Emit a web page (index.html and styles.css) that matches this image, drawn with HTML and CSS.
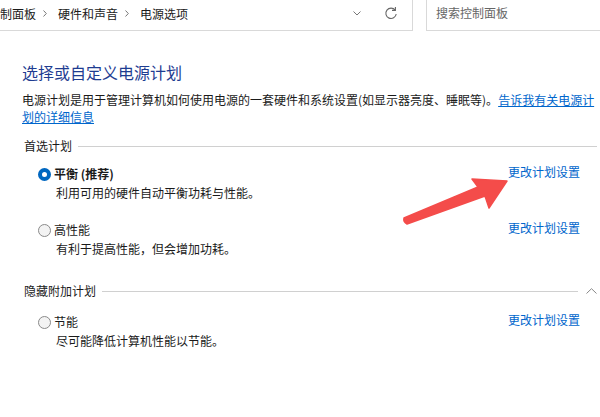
FILE: index.html
```html
<!DOCTYPE html>
<html lang="zh-CN">
<head>
<meta charset="utf-8">
<link rel="stylesheet" href="styles.css">
</head>
<body>
<div class="topbar">
  <div class="address">
    <div class="crumbs">
      <span>制面板</span>
      <svg class="sep" viewBox="0 0 4 7" width="4" height="7"><path d="M0.5 0.5 L3.3 3.5 L0.5 6.5" fill="none" stroke="#777" stroke-width="1"/></svg>
      <span>硬件和声音</span>
      <svg class="sep" viewBox="0 0 4 7" width="4" height="7"><path d="M0.5 0.5 L3.3 3.5 L0.5 6.5" fill="none" stroke="#777" stroke-width="1"/></svg>
      <span>电源选项</span>
    </div>
    <div class="addr-tools">
      <svg class="dd" viewBox="0 0 8 5" width="8" height="5"><path d="M0.5 0.5 L4 4 L7.5 0.5" fill="none" stroke="#777" stroke-width="1"/></svg>
      <svg class="refresh" viewBox="0 0 14 14" width="14" height="14"><path d="M11.2 4.2 A5.2 5.2 0 1 0 12.2 8" fill="none" stroke="#666" stroke-width="1.1"/><path d="M11.4 1 V4.4 H8" fill="none" stroke="#666" stroke-width="1.1"/></svg>
    </div>
  </div>
  <div class="search">搜索控制面板</div>
</div>

<div class="main">
  <h1 class="title">选择或自定义电源计划</h1>
  <p class="desc">电源计划是用于管理计算机如何使用电源的一套硬件和系统设置(如显示器亮度、睡眠等)。<a class="link" href="#">告诉我有关电源计划的详细信息</a></p>

  <div class="section-head"><span>首选计划</span><span class="rule"></span></div>

  <div class="plan first">
    <div class="plan-row">
      <span class="radio checked"></span>
      <span class="plan-name bold">平衡 (推荐)</span>
      <a class="change" href="#">更改计划设置</a>
    </div>
    <div class="plan-desc">利用可用的硬件自动平衡功耗与性能。</div>
  </div>

  <div class="plan second">
    <div class="plan-row">
      <span class="radio"></span>
      <span class="plan-name">高性能</span>
      <a class="change" href="#">更改计划设置</a>
    </div>
    <div class="plan-desc">有利于提高性能，但会增加功耗。</div>
  </div>

  <div class="section-head hidden-head"><span>隐藏附加计划</span><span class="rule"></span>
    <svg class="collapse" viewBox="0 0 11 6" width="11" height="6"><path d="M0.5 5.5 L5.5 0.7 L10.5 5.5" fill="none" stroke="#888" stroke-width="1"/></svg>
  </div>

  <div class="plan third">
    <div class="plan-row">
      <span class="radio"></span>
      <span class="plan-name">节能</span>
      <a class="change" href="#">更改计划设置</a>
    </div>
    <div class="plan-desc">尽可能降低计算机性能以节能。</div>
  </div>
</div>

<svg class="arrow" viewBox="0 0 600 417" width="600" height="417">
  <path d="M404 218 Q403 222 407 224 L485 196 L489 208 L507 181 L472 179 L478 187 Z" fill="#f44c4a" stroke="#f44c4a" stroke-width="1.5" stroke-linejoin="round"/>
</svg>
</body>
</html>
```

FILE: styles.css
```css
html, body {
  margin: 0;
  padding: 0;
  background: #ffffff;
}
body {
  width: 600px;
  height: 417px;
  overflow: hidden;
  position: relative;
  font-family: "Noto Sans CJK SC", "Noto Sans", sans-serif;
  font-size: 12px;
  color: #1a1a1a;
}
.topbar {
  display: flex;
  height: 31px;
}
.address {
  width: 413px;
  height: 30px;
  border-right: 1px solid #d9d9d9;
  border-bottom: 1px solid #d9d9d9;
  display: flex;
  align-items: center;
  justify-content: space-between;
  padding-bottom: 4px;
  box-sizing: border-box;
  height: 31px;
}
.crumbs {
  display: flex;
  align-items: center;
  line-height: 17px;
  color: #1a1a1a;
  white-space: nowrap;
}
.sep {
  margin: 0 11px 0 7px;
}
.addr-tools {
  display: flex;
  align-items: center;
}
.dd {
  margin-right: 23px;
}
.refresh {
  margin-right: 14px;
}
.search {
  margin-left: 13px;
  flex: 1;
  height: 31px;
  box-sizing: border-box;
  border-left: 1px solid #d9d9d9;
  border-bottom: 1px solid #d9d9d9;
  padding: 4px 0 0 9px;
  line-height: 17px;
  color: #666;
}
.main {
  padding: 0 3px 0 22px;
}
.title {
  margin: 30px 0 0 0;
  font-size: 16px;
  line-height: 22px;
  font-weight: normal;
  color: #1e3c91;
}
.desc {
  margin: 8px 0 0 0;
  line-height: 17px;
  color: #1a1a1a;
}
.link, .change {
  color: #0066cc;
}
.link {
  text-decoration: underline;
}
.change {
  text-decoration: none;
  margin-left: auto;
  margin-right: 17px;
  position: relative;
  top: -2px;
}
.section-head {
  display: flex;
  align-items: center;
  margin-top: 12px;
  line-height: 17px;
  padding-left: 2px;
  color: #1a1a1a;
}
.rule {
  flex: 1;
  height: 1px;
  background: #d0d0d0;
  margin-left: 6px;
  margin-top: 1px;
}
.hidden-head {
  margin-top: 24px;
}
.hidden-head .rule {
  margin-right: 8px;
}
.collapse {
  margin-right: 0;
}
.plan.first {
  margin-top: 11px;
}
.plan.second {
  margin-top: 19px;
}
.plan.third {
  margin-top: 14px;
}
.plan-row {
  display: flex;
  align-items: center;
  line-height: 18px;
  padding-left: 16px;
}
.radio {
  width: 13px;
  height: 13px;
  box-sizing: border-box;
  border-radius: 50%;
  border: 1px solid #8a8a8a;
  background: #f3f3f3;
  margin-right: 3px;
  flex: none;
}
.radio.checked {
  border: 4px solid #0067c0;
  background: #ffffff;
}
.bold {
  font-weight: bold;
}
.plan-desc {
  margin-top: 1px;
  line-height: 18px;
  padding-left: 34px;
  color: #1a1a1a;
}
.arrow {
  position: absolute;
  left: 0;
  top: 0;
  pointer-events: none;
}
```
